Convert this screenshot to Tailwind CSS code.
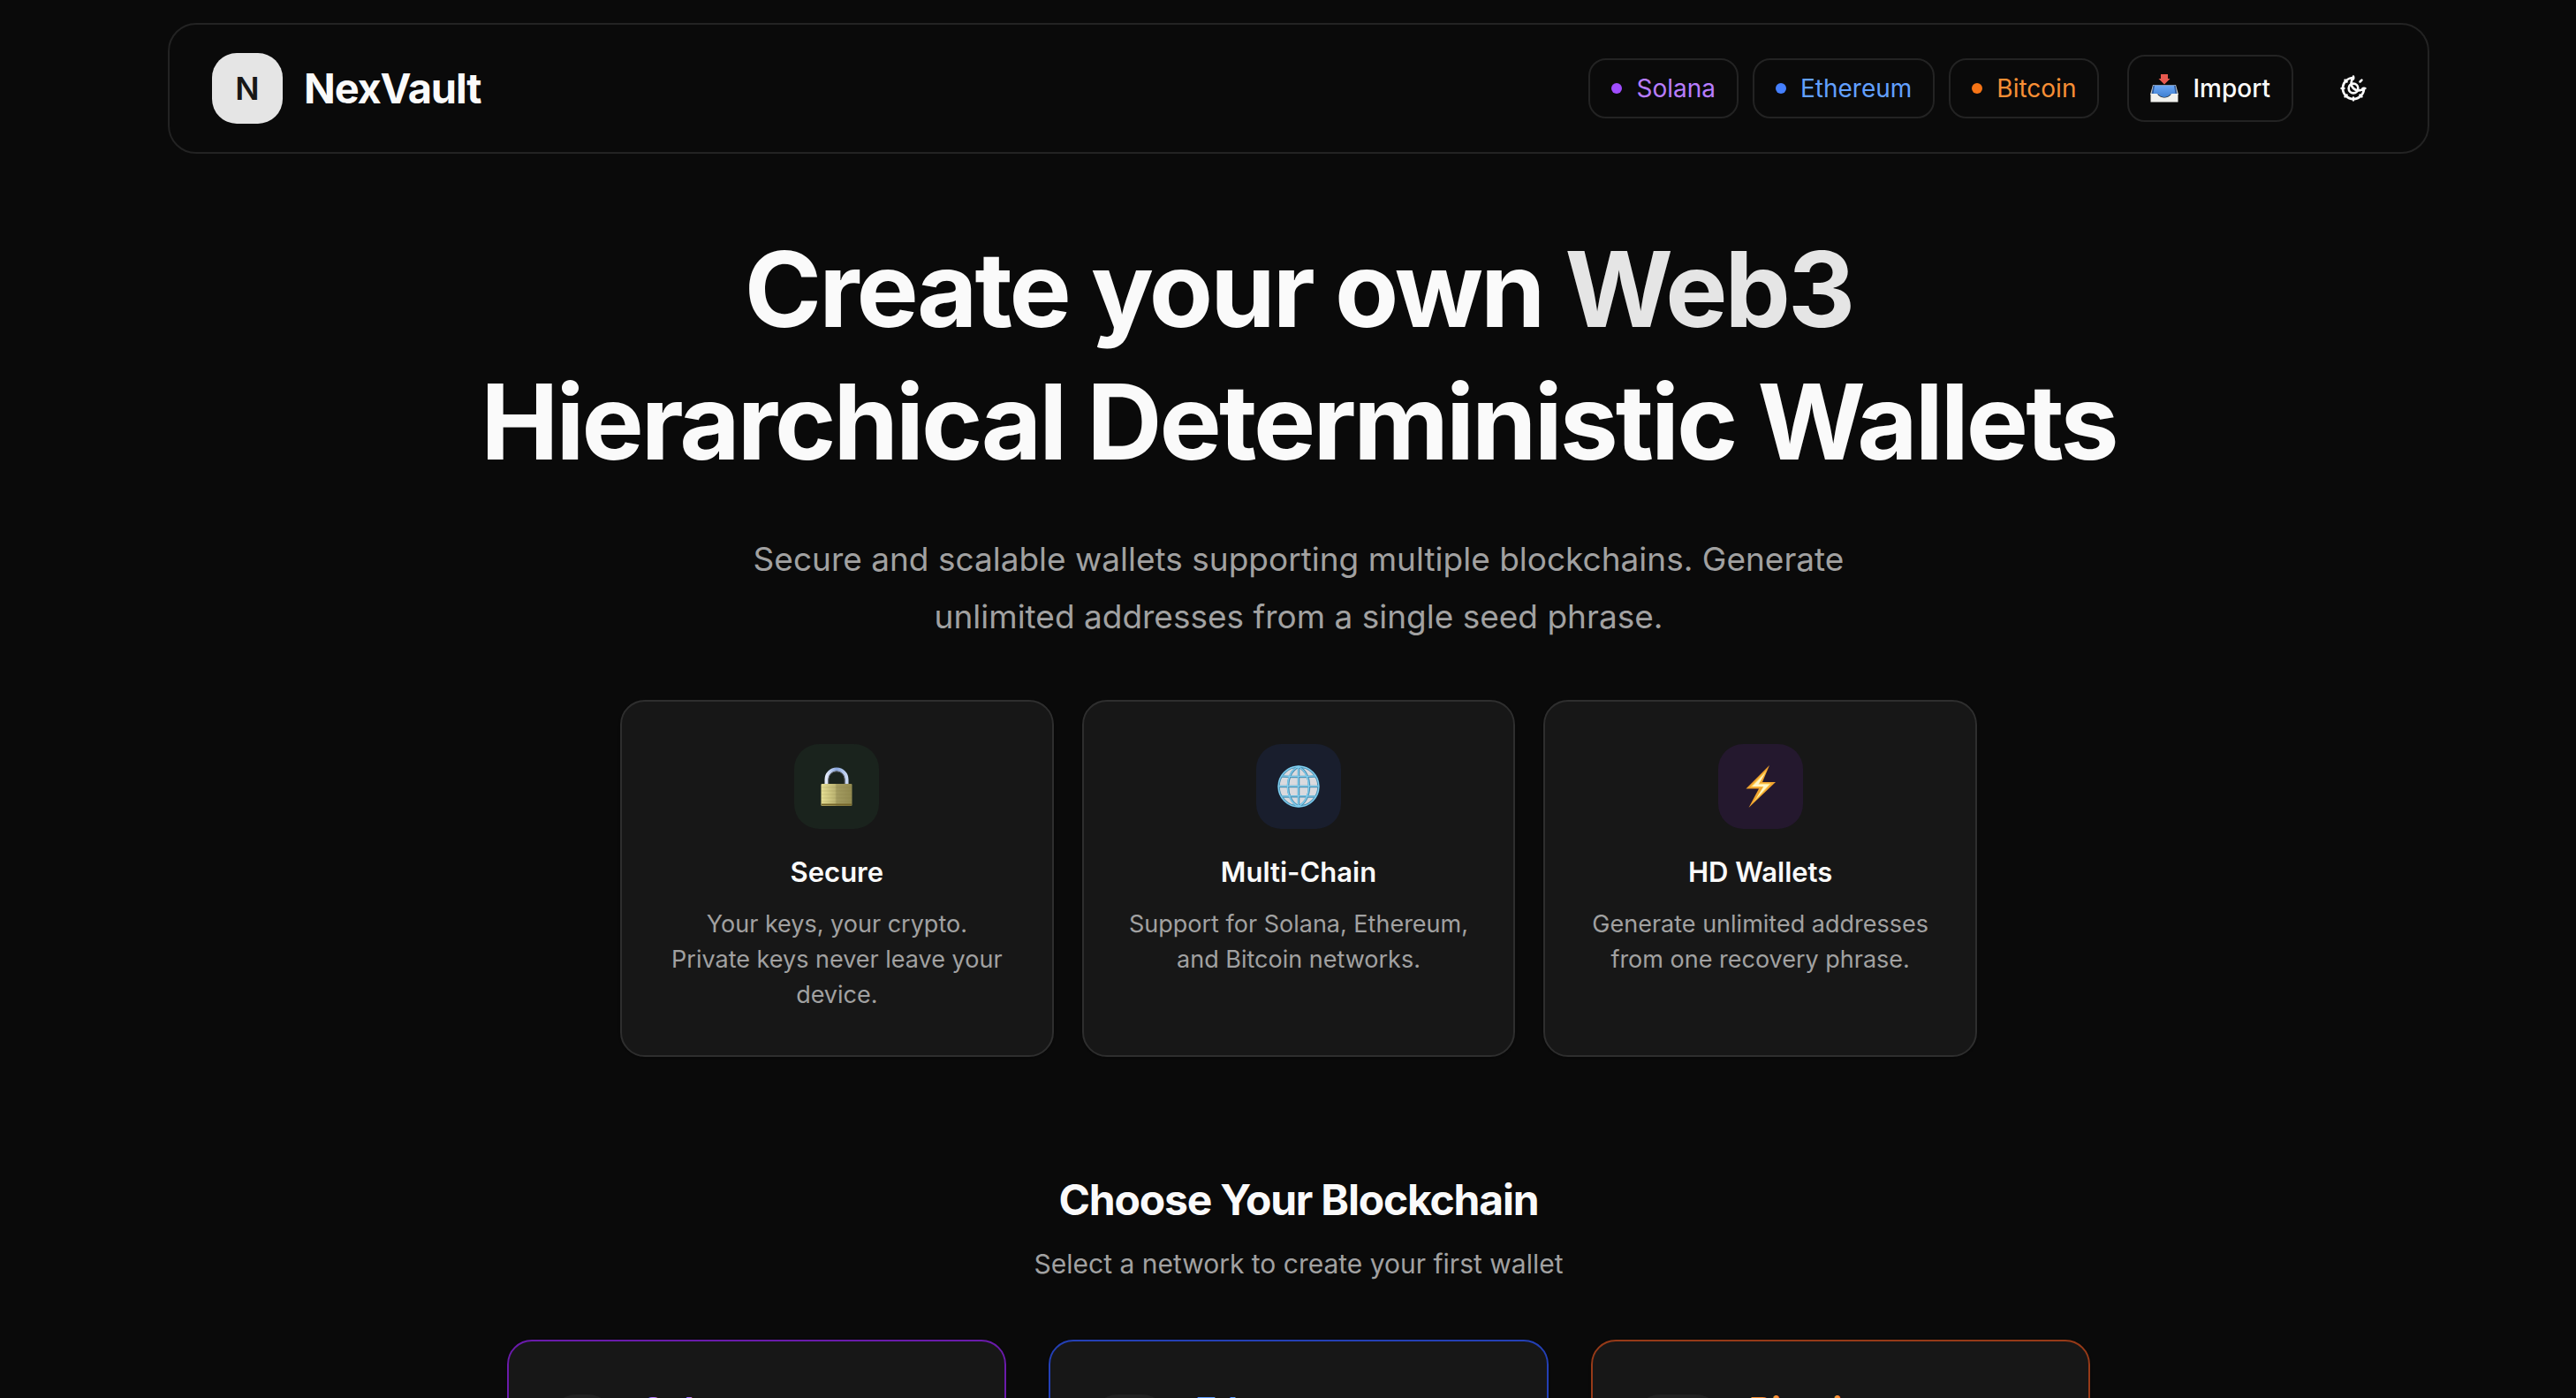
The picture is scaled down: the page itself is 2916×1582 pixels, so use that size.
<!DOCTYPE html>
<html lang="en">
<head>
<meta charset="utf-8">
<meta name="viewport" content="width=device-width, initial-scale=1">
<title>NexVault</title>
<script src="https://cdn.jsdelivr.net/npm/@tailwindcss/browser@4"></script>
</head>
<body class="h-screen overflow-hidden bg-[#0a0a0a] pl-6 font-['Inter','Liberation_Sans',sans-serif] text-[#fafafa] antialiased">

<header class="mx-auto mt-[26px] flex max-w-[2560px] items-center justify-between rounded-[32px] border-2 border-[#232323] px-12 py-8">
  <a href="#" class="flex items-center gap-6">
    <span class="flex size-20 items-center justify-center rounded-[28px] bg-[#e5e5e5] text-[36px] leading-none font-semibold text-[#171717]">N</span>
    <span class="text-[47px] leading-[64px] font-bold tracking-tight">NexVault</span>
  </a>
  <div class="flex items-center gap-8">
    <nav class="flex items-center gap-4 text-[28px] leading-10">
      <a href="#solana" class="flex items-center gap-4 rounded-[20px] border-2 border-[#232323] px-6 py-3 text-[#b87dff]"><span class="size-3 rounded-full bg-[#a04dff]"></span>Solana</a>
      <a href="#ethereum" class="flex items-center gap-4 rounded-[20px] border-2 border-[#232323] px-6 py-3 text-[#62a0ff]"><span class="size-3 rounded-full bg-[#4580ff]"></span>Ethereum</a>
      <a href="#bitcoin" class="flex items-center gap-4 rounded-[20px] border-2 border-[#232323] px-6 py-3 text-[#f78f35]"><span class="size-3 rounded-full bg-[#f67416]"></span>Bitcoin</a>
    </nav>
    <button type="button" class="flex items-center gap-4 rounded-[20px] border-2 border-[#232323] px-6 py-4 text-[28px] leading-10 font-medium">
      <svg class="size-8" viewBox="0 0 32 32" aria-hidden="true">
        <defs>
          <linearGradient id="tray" x1="0" y1="0" x2="0" y2="1"><stop offset="0" stop-color="#6aa6f5"/><stop offset="1" stop-color="#3f7fd0"/></linearGradient>
        </defs>
        <path d="M3 12h26l3 11H0z" fill="#c9c9c4"/>
        <path d="M3.500 12.600h25l2 10H1.500z" fill="#2f5c9e"/>
        <path d="M5 13h22l1.500 9h-5q-3 4-7.500 4t-7.500-4h-5z" fill="url(#tray)"/>
        <path d="M.5 22h7q4 4.500 8.500 4.500t8.500-4.500h7v9.500H.5z" fill="#f1f1ee"/>
        <path d="M12 0h8v5h2.500L16 11.500 9.500 5H12z" fill="#e8594f"/>
      </svg>
      Import
    </button>
    <button type="button" aria-label="Toggle theme" class="flex size-18 items-center justify-center">
      <svg class="size-8" viewBox="0 0 24 24" fill="none" stroke="currentColor" stroke-width="2" stroke-linecap="round" stroke-linejoin="round" aria-hidden="true">
        <circle cx="12" cy="12" r="4"/>
        <path d="M12 2v2M12 20v2M4.930 4.930l1.410 1.410M17.660 17.660l1.410 1.410M2 12h2M20 12h2M6.340 17.660l-1.410 1.410M19.070 4.930l-1.410 1.410"/>
        <path d="M12 3a6 6 0 0 0 9 9 9 9 0 1 1-9-9Z"/>
      </svg>
    </button>
  </div>
</header>

<main>
  <section class="mt-[78px] text-center">
    <h1 class="text-[118px] leading-[150px] font-bold tracking-tight">Create your own <span class="text-[#e5e5e5]">Web3</span><br>Hierarchical Deterministic Wallets</h1>
    <p class="mx-auto mt-12 max-w-[1344px] text-[37px] leading-[65px] text-[#a1a1a1]">Secure and scalable wallets supporting multiple blockchains. Generate unlimited addresses from a single seed phrase.</p>
  </section>

  <section class="mx-auto mt-[62px] grid max-w-[1536px] grid-cols-3 gap-8 text-center">
    <article class="rounded-[28px] border-2 border-[#2e2e2e] bg-[#171717] p-12 shadow-sm">
      <div class="mx-auto flex size-24 items-center justify-center rounded-[28px] bg-[#1a231d]">
        <svg class="size-12" viewBox="0 0 48 48" aria-hidden="true">
          <defs>
            <linearGradient id="brass" x1="0" x2="1" y1="0" y2="0"><stop offset="0" stop-color="#e6df94"/><stop offset=".45" stop-color="#bdb573"/><stop offset=".5" stop-color="#a39b60"/><stop offset="1" stop-color="#928a50"/></linearGradient>
            <linearGradient id="steel" x1="0" x2="1" y1="0" y2="0"><stop offset="0" stop-color="#e4ebfa"/><stop offset=".5" stop-color="#88a6dc"/><stop offset="1" stop-color="#c8d7f3"/></linearGradient>
          </defs>
          <path d="M12.500 22v-6a11.500 11.500 0 0 1 23 0v6" fill="none" stroke="url(#steel)" stroke-width="4"/>
          <path d="M14.800 22v-6a9.200 9.200 0 0 1 18.400 0v6" fill="none" stroke="#6c6f78" stroke-width="1"/>
          <rect x="6.500" y="21" width="35" height="25" rx="1" fill="url(#brass)"/>
          <path d="M7 25h34M7 29h34M7 33h34M7 37h34M7 41h34" stroke="#7f763c" stroke-opacity=".18"/>
          <path d="M7 44.500h34" stroke="#75652a" stroke-width="2"/>
        </svg>
      </div>
      <h3 class="mt-6 text-[31px] leading-[50px] font-semibold">Secure</h3>
      <p class="mt-[14px] text-[27px] leading-10 text-[#a1a1a1]">Your keys, your crypto. Private keys never leave your device.</p>
    </article>
    <article class="rounded-[28px] border-2 border-[#2e2e2e] bg-[#171717] p-12 shadow-sm">
      <div class="mx-auto flex size-24 items-center justify-center rounded-[28px] bg-[#191e2d]">
        <svg class="size-12" viewBox="0 0 48 48" fill="none" aria-hidden="true">
          <circle cx="24" cy="24" r="22.500" fill="#dadade"/>
          <g stroke="#4d92b5" stroke-width="2.500">
            <circle cx="24" cy="24" r="22.500"/>
            <path d="M24 1.500v45M1.500 24h45M4.500 12.500q19.500 1 39 0M4.500 35.500q19.500-1 39 0M24 1.500C8 9 8 39 24 46.500M24 1.500c16 7.500 16 37.500 0 45"/>
          </g>
          <g stroke="#83d0f0" stroke-width="1.200">
            <circle cx="24" cy="24" r="22.800"/>
            <path d="M23.500 1.500v45M1.500 23.500h45M4.500 12q19.500 1 39 0M4.500 35q19.500-1 39 0M23.500 1.500C7.500 9 7.500 39 23.500 46.500M23.500 1.500c16 7.500 16 37.500 0 45"/>
          </g>
        </svg>
      </div>
      <h3 class="mt-6 text-[31px] leading-[50px] font-semibold">Multi-Chain</h3>
      <p class="mt-[14px] text-[27px] leading-10 text-[#a1a1a1]">Support for Solana, Ethereum, and Bitcoin networks.</p>
    </article>
    <article class="rounded-[28px] border-2 border-[#2e2e2e] bg-[#171717] p-12 shadow-sm">
      <div class="mx-auto flex size-24 items-center justify-center rounded-[28px] bg-[#24182e]">
        <svg class="size-12" viewBox="0 0 48 48" aria-hidden="true">
          <path d="M34 0 7.500 26.500H22L10.500 48 41 19H26z" fill="#f0a32f"/>
          <path d="M31 5.500 12.500 24.500H27L15.500 42.500 36 20.500H22.500z" fill="#ffd75a"/>
          <path d="M29 9 14.500 24H27.500L19.500 37 34 21.500H21.500z" fill="#fff6c8"/>
        </svg>
      </div>
      <h3 class="mt-6 text-[31px] leading-[50px] font-semibold">HD Wallets</h3>
      <p class="mt-[14px] text-[27px] leading-10 text-[#a1a1a1]">Generate unlimited addresses from one recovery phrase.</p>
    </article>
  </section>

  <section class="mt-[130px]">
    <div class="text-center">
      <h2 class="text-[48px] leading-[64px] font-bold tracking-tight">Choose Your Blockchain</h2>
      <p class="mt-4 text-[30px] leading-[48px] text-[#a1a1a1]">Select a network to create your first wallet</p>
    </div>
    <div class="mx-auto mt-[62px] grid max-w-[1792px] grid-cols-3 gap-12">
      <article id="solana" class="flex items-start gap-8 rounded-[28px] border-2 border-[#6a1baa] bg-[#171717] p-12 shadow-sm">
        <span class="mt-3 h-18 w-[70px] rounded-[28px] bg-[#212121]"></span>
        <h3 class="text-[40px] leading-[60px] font-bold tracking-tight text-[#b87dff]">Solana</h3>
      </article>
      <article id="ethereum" class="flex items-start gap-8 rounded-[28px] border-2 border-[#2440b5] bg-[#171717] p-12 shadow-sm">
        <span class="mt-3 h-18 w-[84px] rounded-[28px] bg-[#212121]"></span>
        <h3 class="text-[40px] leading-[60px] font-bold tracking-tight text-[#62a0ff]">Ethereum</h3>
      </article>
      <article id="bitcoin" class="flex items-start gap-8 rounded-[28px] border-2 border-[#963a18] bg-[#171717] p-12 shadow-sm">
        <span class="mt-3 h-18 w-[97px] rounded-[28px] bg-[#212121]"></span>
        <h3 class="text-[40px] leading-[60px] font-bold tracking-tight text-[#f78f35]">Bitcoin</h3>
      </article>
    </div>
  </section>
</main>
</body>
</html>
